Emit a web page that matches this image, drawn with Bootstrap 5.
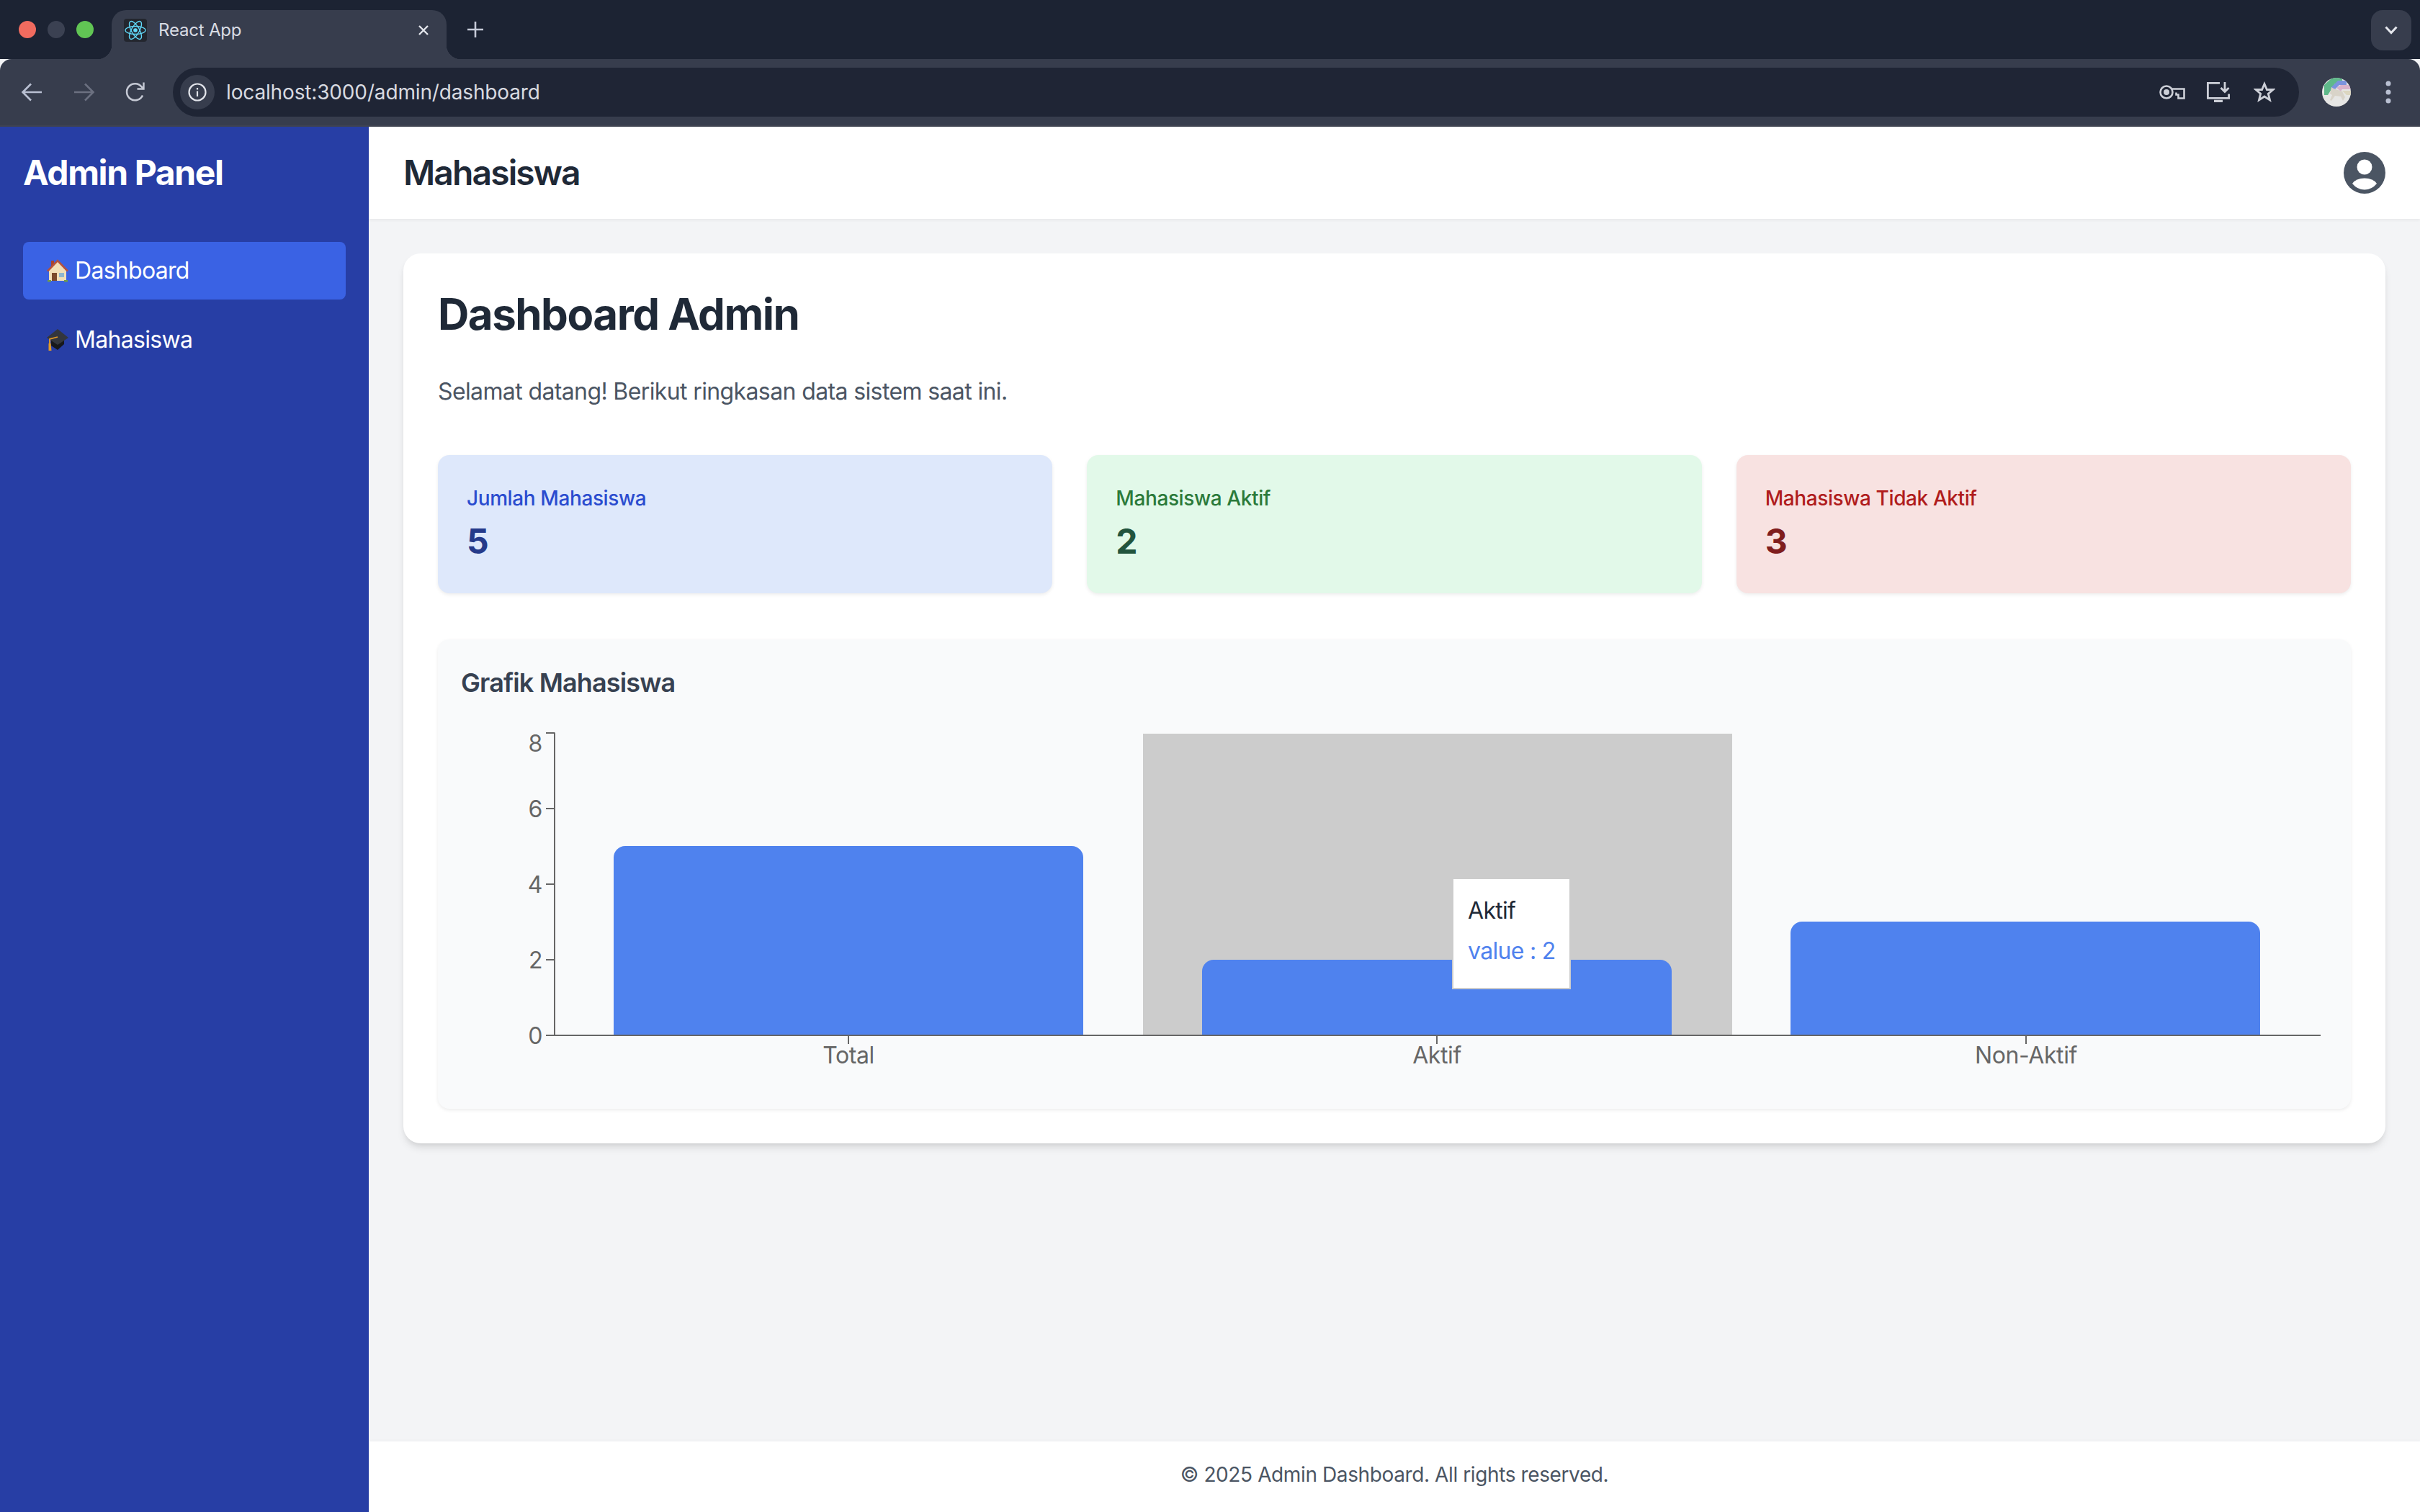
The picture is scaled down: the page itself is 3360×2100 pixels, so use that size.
<!DOCTYPE html>
<html lang="id">

<head>
    <meta charset="UTF-8">
    <meta name="viewport" content="width=device-width, initial-scale=1.0">
    <title>React App</title>
    <link href="https://cdn.jsdelivr.net/npm/bootstrap@5.3.2/dist/css/bootstrap.min.css" rel="stylesheet">
    <style>
        body {
            font-family: "Inter", "Liberation Sans", sans-serif;
            background-color: #f3f4f6;
            color: #1f2937;
            overflow: hidden;
        }

        /* browser frame */
        .tab-strip {
            height: 82px;
            background-color: #1c2333;
        }

        .traffic {
            width: 155px;
            padding-left: 26px;
            gap: 16px;
        }

        .traffic span {
            width: 24px;
            height: 24px;
            border-radius: 50%;
        }

        .browser-tab {
            position: relative;
            width: 465px;
            height: 68px;
            margin-top: 14px;
            padding: 0 24px 12px 17px;
            gap: 16px;
            background-color: #373d4d;
            border-radius: 20px 20px 0 0;
            color: #d8dbe3;
            font-size: 24px;
            letter-spacing: -0.2px;
        }

        .browser-tab::before,
        .browser-tab::after {
            content: "";
            position: absolute;
            bottom: 0;
            width: 20px;
            height: 20px;
        }

        .browser-tab::before {
            left: -20px;
            background: radial-gradient(circle at 0 0, #1c2333 20px, #373d4d 20.5px);
        }

        .browser-tab::after {
            right: -20px;
            background: radial-gradient(circle at 100% 0, #1c2333 20px, #373d4d 20.5px);
        }

        .tab-favicon {
            width: 32px;
            height: 32px;
            border-radius: 4px;
            background-color: #23262e;
        }

        .new-tab {
            margin-left: 29px;
            margin-top: 14px;
            height: 54px;
        }

        .tabs-menu {
            width: 56px;
            height: 56px;
            margin: 14px 12px 0 auto;
            border-radius: 16px;
            background-color: #373d4d;
        }

        .tool-bar {
            height: 94px;
            padding: 0 40px 0 28px;
            background-color: #373d4d;
            border-bottom: 2px solid #3f4350;
            border-radius: 16px 16px 0 0;
        }

        .tool-nav {
            gap: 40px;
        }

        .omnibox {
            height: 68px;
            margin: 0 32px 0 36px;
            padding: 0 33px 0 10px;
            background-color: #1f2535;
            border-radius: 34px;
            color: #d8dae0;
            font-size: 28px;
            letter-spacing: -0.15px;
        }

        .info-chip {
            width: 48px;
            height: 48px;
            margin-right: 16px;
            border-radius: 50%;
            background-color: #373d4d;
        }

        .omni-icons {
            gap: 30px;
        }

        .omni-icons svg:last-child {
            margin-left: 3px;
        }

        .tool-end {
            gap: 48px;
        }

        /* sidebar */
        .side-panel {
            width: 512px;
            padding: 32px;
            background-color: #273ea5;
            color: #fff;
        }

        .side-title {
            font-size: 48px;
            line-height: 64px;
            font-weight: 700;
            letter-spacing: -1.4px;
            margin-bottom: 64px;
        }

        .side-menu {
            --bs-nav-pills-border-radius: 8px;
            --bs-nav-pills-link-active-bg: #3a62e4;
            --bs-nav-pills-link-active-color: #fff;
            --bs-nav-link-color: #fff;
            --bs-nav-link-hover-color: #fff;
            --bs-nav-link-padding-x: 32px;
            --bs-nav-link-padding-y: 16px;
            --bs-nav-link-font-size: 32px;
            gap: 16px;
        }

        .side-menu .nav-link {
            line-height: 48px;
            gap: 8px;
            letter-spacing: -0.7px;
        }

        /* header */
        .top-bar {
            height: 128px;
            padding: 0 48px;
            background-color: #fff;
            box-shadow: 0 2px 4px rgba(0, 0, 0, 0.05);
            position: relative;
        }

        .top-title {
            font-size: 48px;
            font-weight: 600;
            line-height: 64px;
            letter-spacing: -1.9px;
            margin: 0;
            color: #1f2937;
        }

        .page-body {
            padding: 48px;
        }

        .dash-panel {
            padding: 48px;
            background-color: #fff;
            border-radius: 24px;
            box-shadow: 0 8px 12px -2px rgba(0, 0, 0, 0.1), 0 4px 8px -4px rgba(0, 0, 0, 0.1);
        }

        .dash-title {
            font-size: 60px;
            line-height: 72px;
            font-weight: 700;
            letter-spacing: -1.5px;
            margin-bottom: 48px;
            color: #1f2937;
        }

        .dash-intro {
            font-size: 32px;
            line-height: 48px;
            letter-spacing: -0.62px;
            margin-bottom: 64px;
            color: #4b5563;
        }

        .stat-box {
            height: 192px;
            padding: 40px;
            border-radius: 16px;
            box-shadow: 0 2px 5px rgba(0, 0, 0, 0.08);
        }

        .stat-label {
            font-size: 28px;
            line-height: 40px;
            font-weight: 500;
            letter-spacing: -0.4px;
        }

        .stat-value {
            font-size: 48px;
            line-height: 64px;
            font-weight: 700;
            margin-top: 8px;
        }

        .stat-blue {
            background-color: #dee8fb;
        }

        .stat-blue .stat-label {
            color: #2b4ccf;
        }

        .stat-blue .stat-value {
            color: #253a8a;
        }

        .stat-green {
            background-color: #e2f9e9;
        }

        .stat-green .stat-label {
            color: #2b7a3a;
        }

        .stat-green .stat-value {
            color: #22543d;
        }

        .stat-red {
            background-color: #f8e2e1;
        }

        .stat-red .stat-label {
            color: #b01c1c;
        }

        .stat-red .stat-value {
            color: #7f1d1d;
        }

        .chart-panel {
            margin-top: 64px;
            padding: 32px;
            background-color: #f9fafb;
            border-radius: 16px;
            box-shadow: 0 2px 5px rgba(0, 0, 0, 0.08);
        }

        .chart-title {
            font-size: 36px;
            line-height: 56px;
            font-weight: 600;
            letter-spacing: -0.87px;
            margin-bottom: 32px;
            color: #374151;
        }

        .chart-wrap {
            position: relative;
            height: 500px;
        }

        .chart-wrap text {
            font-family: "Inter", "Liberation Sans", sans-serif;
            font-size: 32px;
            letter-spacing: -0.4px;
            fill: #666;
        }

        .chart-tip {
            position: absolute;
            left: 1376px;
            top: 211px;
            width: 165px;
            height: 155px;
            padding: 20px;
            background-color: #fff;
            border: 2px solid #ccc;
            font-size: 32px;
            line-height: 48px;
            letter-spacing: -0.7px;
            white-space: nowrap;
        }

        .chart-tip .tip-value {
            padding-top: 8px;
            color: #4f82ee;
        }

        .page-foot {
            height: 98px;
            padding-bottom: 6px;
            background-color: #fff;
            color: #4b5563;
            font-size: 28px;
            letter-spacing: -0.39px;
            box-shadow: 0 -2px 4px rgba(0, 0, 0, 0.02);
        }
    </style>
</head>

<body>
    <div class="vh-100 d-flex flex-column">
        <!-- Browser frame -->
        <div class="tab-strip d-flex flex-shrink-0">
            <div class="traffic d-flex align-items-center">
                <span style="background-color:#f16b5f"></span>
                <span style="background-color:#3b4152"></span>
                <span style="background-color:#61c554"></span>
            </div>
            <div class="browser-tab d-flex align-items-center">
                <span class="tab-favicon d-flex align-items-center justify-content-center">
                    <svg width="30" height="30" viewBox="-15 -15 30 30" fill="none" stroke="#61dafb" stroke-width="1.4">
                        <circle r="2.8" fill="#61dafb" stroke="none"/>
                        <ellipse rx="14" ry="5.5"/>
                        <ellipse rx="14" ry="5.5" transform="rotate(60)"/>
                        <ellipse rx="14" ry="5.5" transform="rotate(120)"/>
                    </svg>
                </span>
                <span>React App</span>
                <svg class="ms-auto" width="16" height="16" viewBox="0 0 16 16" stroke="#e4e6ec" stroke-width="2.4">
                    <path d="M2 2l12 12M14 2L2 14"/>
                </svg>
            </div>
            <div class="new-tab d-flex align-items-center">
                <svg width="22" height="22" viewBox="0 0 22 22" stroke="#c5cad8" stroke-width="2.6">
                    <path d="M11 0v22M0 11h22"/>
                </svg>
            </div>
            <div class="tabs-menu d-flex align-items-center justify-content-center">
                <svg width="18" height="12" viewBox="0 0 18 12" fill="none" stroke="#e4e6ec" stroke-width="3">
                    <path d="M1.5 1.5L9 9.5l7.5-8"/>
                </svg>
            </div>
        </div>
        <div class="tool-bar d-flex align-items-center flex-shrink-0">
            <div class="tool-nav d-flex align-items-center">
                <svg width="32" height="28" viewBox="0 0 32 28" fill="none" stroke="#b9c0d2" stroke-width="2.6">
                    <path d="M30 14H5M15 2.5L3.5 14 15 25.5"/>
                </svg>
                <svg width="32" height="28" viewBox="0 0 32 28" fill="none" stroke="#6b7080" stroke-width="2.6">
                    <path d="M3 14h25M18 2.5L29.500 14 18 25.500"/>
                </svg>
                <svg width="32" height="30" viewBox="0 0 32 30" fill="none" stroke="#c5c9d4" stroke-width="2.6">
                    <path d="M26 19.500A11.500 11.500 0 1 1 24.500 7.500L27 10"/>
                    <path d="M27.500 1.500V10.500H18.500" stroke-width="2.400"/>
                </svg>
            </div>
            <div class="omnibox flex-grow-1 d-flex align-items-center">
                <span class="info-chip d-flex align-items-center justify-content-center">
                    <svg width="26" height="26" viewBox="0 0 26 26" fill="none" stroke="#e2e4ea" stroke-width="2.2">
                        <circle cx="13" cy="13" r="11.500"/>
                        <path d="M13 11.500v7.500M13 7v2.500"/>
                    </svg>
                </span>
                <span>localhost:3000/admin/dashboard</span>
                <div class="omni-icons ms-auto d-flex align-items-center">
                    <svg width="36" height="20" viewBox="0 0 36 20" fill="none" stroke="#cdd0d8" stroke-width="2.600">
                        <circle cx="10" cy="10" r="8.500"/>
                        <circle cx="10" cy="10" r="4" fill="#cdd0d8" stroke="none"/>
                        <path d="M18 5.500h16.500v13h-8v-5h-3v-3"/>
                    </svg>
                    <svg width="32" height="28" viewBox="0 0 32 28" fill="none" stroke="#cdd0d8" stroke-width="2.800">
                        <path d="M18 1.400H1.400v21h29.200v-6"/>
                        <path d="M25 0v13M19.500 8l5.500 5.500L30.500 8"/>
                        <path d="M10 26.500h12" stroke-width="3.500"/>
                    </svg>
                    <svg width="30" height="30" viewBox="0 0 30 30" fill="none" stroke="#cdd0d8" stroke-width="2.800">
                        <path d="M15 3.500l3.400 8h8.600l-6.700 5.700 2.200 8.700L15 21l-7.500 4.900 2.200-8.700L3 11.500h8.600z"/>
                    </svg>
                </div>
            </div>
            <div class="tool-end d-flex align-items-center">
                <svg width="40" height="40" viewBox="0 0 40 40">
                    <defs>
                        <clipPath id="avatarClip"><circle cx="20" cy="20" r="20"/></clipPath>
                    </defs>
                    <g clip-path="url(#avatarClip)">
                        <rect width="40" height="40" fill="#e6e6e4"/>
                        <path d="M3 24V10L14 0h14v8H18L8 24z" fill="#5fb98a"/>
                        <path d="M12 14L22 4h12v6H24l-6 6z" fill="#7b93dd"/>
                        <path d="M20 14l6-4h14v6H28l-2 3z" fill="#d9b3cb"/>
                        <path d="M28 18h12v6H34z" fill="#dcd6c0"/>
                        <path d="M11 22l2-9 3 2 12 4 4 8-3 5-3-6-8-1-5 7-2-1 3-7z" fill="#d8d3c8"/>
                    </g>
                </svg>
                <svg width="8" height="34" viewBox="0 0 8 34" fill="#b9c0d2">
                    <circle cx="4" cy="5" r="3.500"/>
                    <circle cx="4" cy="17" r="3.500"/>
                    <circle cx="4" cy="29" r="3.500"/>
                </svg>
            </div>
        </div>

        <!-- Application -->
        <div class="d-flex flex-grow-1" style="min-height:0">
            <aside class="side-panel flex-shrink-0">
                <div class="side-title">Admin Panel</div>
                <nav class="side-menu nav nav-pills flex-column">
                    <a class="nav-link active d-flex align-items-center" href="#">
                        <svg width="32" height="32" viewBox="0 0 32 32">
                            <path d="M7 2h4v9H7z" fill="#a8442f"/>
                            <path d="M4 16L16 3l12 13v14H4z" fill="#f1dfb8"/>
                            <path d="M2 16.500L16 2l14 14.500" fill="none" stroke="#b5523c" stroke-width="2.600"/>
                            <path d="M8 19h7v11H8z" fill="#7b4a2c"/>
                            <path d="M18 19h7v6h-7z" fill="#8fb7cf"/>
                            <path d="M2 29h5v2.500H2zM25 29h5v2.500h-5z" fill="#6f9a4c"/>
                        </svg>
                        Dashboard
                    </a>
                    <a class="nav-link d-flex align-items-center" href="#">
                        <svg width="32" height="32" viewBox="0 0 32 32">
                            <path d="M7 14v10l9 6 9-8V14z" fill="#17181c"/>
                            <path d="M16 1L31 13 16 23 1 13z" fill="#33363d"/>
                            <path d="M16 12L5 15v6" fill="none" stroke="#e39a26" stroke-width="1.800"/>
                            <path d="M3.500 21h3l1 10h-4z" fill="#e39a26"/>
                        </svg>
                        Mahasiswa
                    </a>
                </nav>
            </aside>

            <div class="flex-grow-1 d-flex flex-column" style="min-width:0">
                <header class="top-bar d-flex align-items-center justify-content-between flex-shrink-0">
                    <h1 class="top-title">Mahasiswa</h1>
                    <svg width="58" height="58" viewBox="0 0 58 58">
                        <circle cx="29" cy="29" r="29" fill="#4b5563"/>
                        <circle cx="29" cy="21" r="10.500" fill="#fff"/>
                        <path d="M12 44Q17 36.500 29 36.500Q41 36.500 46 44Q39 52.500 29 52.500Q19 52.500 12 44Z" fill="#fff"/>
                    </svg>
                </header>

                <main class="page-body flex-grow-1">
                    <div class="dash-panel">
                        <h2 class="dash-title">Dashboard Admin</h2>
                        <p class="dash-intro">Selamat datang! Berikut ringkasan data sistem saat ini.</p>

                        <div class="row gx-5">
                            <div class="col-4">
                                <div class="stat-box stat-blue">
                                    <div class="stat-label">Jumlah Mahasiswa</div>
                                    <div class="stat-value">5</div>
                                </div>
                            </div>
                            <div class="col-4">
                                <div class="stat-box stat-green">
                                    <div class="stat-label">Mahasiswa Aktif</div>
                                    <div class="stat-value">2</div>
                                </div>
                            </div>
                            <div class="col-4">
                                <div class="stat-box stat-red">
                                    <div class="stat-label">Mahasiswa Tidak Aktif</div>
                                    <div class="stat-value">3</div>
                                </div>
                            </div>
                        </div>

                        <div class="chart-panel">
                            <h3 class="chart-title">Grafik Mahasiswa</h3>
                            <div class="chart-wrap">
                                <svg width="2592" height="500" viewBox="0 0 2592 500">
                                    <!-- hover band -->
                                    <rect x="947" y="11" width="818" height="419" fill="#ccc"/>
                                    <!-- bars -->
                                    <path d="M212 430V183a16 16 0 0 1 16-16H848a16 16 0 0 1 16 16V430Z" fill="#4f82ee"/>
                                    <path d="M1029 430V341a16 16 0 0 1 16-16H1665a16 16 0 0 1 16 16V430Z" fill="#4f82ee"/>
                                    <path d="M1846 430V288a16 16 0 0 1 16-16H2482a16 16 0 0 1 16 16V430Z" fill="#4f82ee"/>
                                    <!-- axes -->
                                    <g stroke="#666" stroke-width="2" fill="none">
                                        <path d="M130 9.500V430M118 430H2582"/>
                                        <path d="M118 10H130M118 115H130M118 220H130M118 325H130"/>
                                        <path d="M538 430V442M1355 430V442M2173 430V442"/>
                                    </g>
                                    <text x="113" y="36" text-anchor="end">8</text>
                                    <text x="113" y="127" text-anchor="end">6</text>
                                    <text x="113" y="232" text-anchor="end">4</text>
                                    <text x="113" y="337" text-anchor="end">2</text>
                                    <text x="113" y="442" text-anchor="end">0</text>
                                    <text x="538" y="469" text-anchor="middle">Total</text>
                                    <text x="1355" y="469" text-anchor="middle">Aktif</text>
                                    <text x="2173" y="469" text-anchor="middle">Non-Aktif</text>
                                </svg>
                                <div class="chart-tip">
                                    <div>Aktif</div>
                                    <div class="tip-value">value : 2</div>
                                </div>
                            </div>
                        </div>
                    </div>
                </main>

                <footer class="page-foot d-flex align-items-center justify-content-center flex-shrink-0">
                    © 2025 Admin Dashboard. All rights reserved.
                </footer>
            </div>
        </div>
    </div>

    <script src="https://cdn.jsdelivr.net/npm/bootstrap@5.3.2/dist/js/bootstrap.bundle.min.js"></script>
</body>

</html>
